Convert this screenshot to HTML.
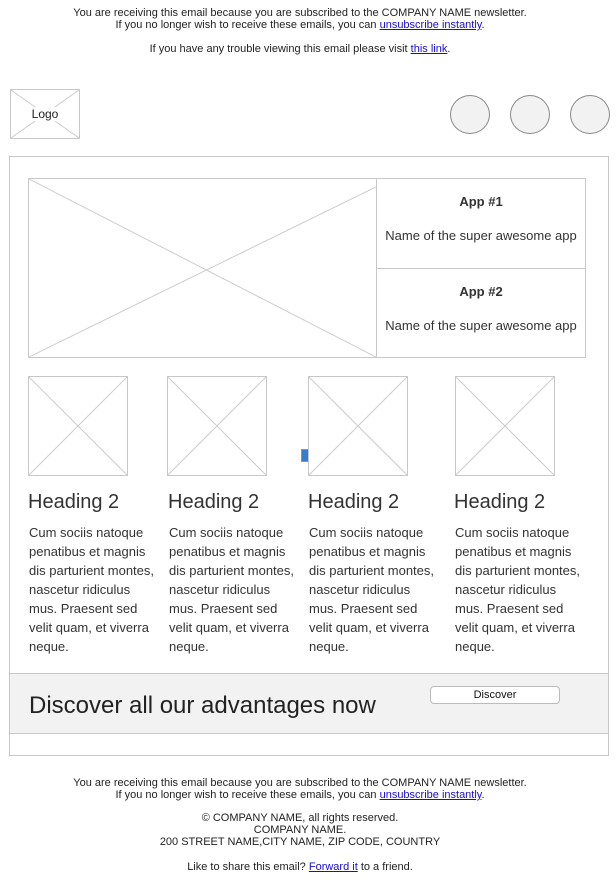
<!DOCTYPE html>
<html><head><meta charset="utf-8"><style>
*{margin:0;padding:0;box-sizing:border-box}
body{width:616px;height:883px;background:#fff;font-family:"Liberation Sans",Arial,sans-serif;color:#222;position:relative;overflow:hidden}
.a{position:absolute}
.t{position:absolute;left:0;width:600px;text-align:center;font-size:11px;line-height:12px;color:#222}
a{color:#1a0dcc;text-decoration:underline}
.ph{position:absolute;border:1px solid #c8c8c8;background:#fff}
.ph svg{position:absolute;left:0;top:0;width:100%;height:100%}
.h2{position:absolute;top:490px;font-size:20px;line-height:24px;color:#333}
.p{position:absolute;top:523px;font-size:13px;line-height:19px;color:#333;width:130px}
.app{position:absolute;left:376px;width:210px;border:1px solid #c8c8c8;text-align:center;font-size:13px;color:#333}
.c{position:absolute;top:95px;width:40px;height:39px;border-radius:50%;border:1px solid #888;background:#f2f2f2}
</style></head><body>
<div class="t" style="top:7px">You are receiving this email because you are subscribed to the COMPANY NAME newsletter.</div>
<div class="t" style="top:19px">If you no longer wish to receive these emails, you can <a>unsubscribe instantly</a>.</div>
<div class="t" style="top:43px">If you have any trouble viewing this email please visit <a>this link</a>.</div>

<div class="ph" style="left:10px;top:89px;width:70px;height:50px"><svg viewBox="0 0 70 50" preserveAspectRatio="none"><line x1="0" y1="0" x2="70" y2="50" stroke="#ccc"/><line x1="70" y1="0" x2="0" y2="50" stroke="#ccc"/></svg><div class="a" style="left:0;top:17px;width:68px;text-align:center;font-size:12px;background:transparent"><span style="background:#fff">Logo</span></div></div>
<div class="c" style="left:450px"></div>
<div class="c" style="left:510px"></div>
<div class="c" style="left:570px"></div>

<div class="a" style="left:9px;top:156px;width:600px;height:600px;border:1px solid #c8c8c8"></div>

<div class="ph" style="left:28px;top:178px;width:349px;height:180px"><svg viewBox="0 0 349 180" preserveAspectRatio="none"><line x1="0" y1="0" x2="349" y2="180" stroke="#ccc"/><line x1="349" y1="8" x2="0" y2="180" stroke="#ccc"/></svg></div>
<div class="app" style="top:178px;height:91px"><div style="font-weight:bold;margin-top:15px">App #1</div><div style="margin-top:19px">Name of the super awesome app</div></div>
<div class="app" style="top:268px;height:90px"><div style="font-weight:bold;margin-top:15px">App #2</div><div style="margin-top:19px">Name of the super awesome app</div></div>

<div class="a" style="left:301px;top:449px;width:9px;height:13px;background:#3a7bc8;border:1px solid #6a9ad8"></div>
<div class="ph" style="left:28px;top:376px;width:100px;height:100px"><svg viewBox="0 0 100 100"><line x1="0" y1="0" x2="100" y2="100" stroke="#ccc"/><line x1="100" y1="0" x2="0" y2="100" stroke="#ccc"/></svg></div>
<div class="ph" style="left:167px;top:376px;width:100px;height:100px"><svg viewBox="0 0 100 100"><line x1="0" y1="0" x2="100" y2="100" stroke="#ccc"/><line x1="100" y1="0" x2="0" y2="100" stroke="#ccc"/></svg></div>
<div class="ph" style="left:308px;top:376px;width:100px;height:100px"><svg viewBox="0 0 100 100"><line x1="0" y1="0" x2="100" y2="100" stroke="#ccc"/><line x1="100" y1="0" x2="0" y2="100" stroke="#ccc"/></svg></div>
<div class="ph" style="left:455px;top:376px;width:100px;height:100px"><svg viewBox="0 0 100 100"><line x1="0" y1="0" x2="100" y2="100" stroke="#ccc"/><line x1="100" y1="0" x2="0" y2="100" stroke="#ccc"/></svg></div>

<div class="h2" style="left:28px">Heading 2</div>
<div class="h2" style="left:168px">Heading 2</div>
<div class="h2" style="left:308px">Heading 2</div>
<div class="h2" style="left:454px">Heading 2</div>
<div class="p" style="left:29px">Cum sociis natoque penatibus et magnis dis parturient montes, nascetur ridiculus mus. Praesent sed velit quam, et viverra neque.</div>
<div class="p" style="left:169px">Cum sociis natoque penatibus et magnis dis parturient montes, nascetur ridiculus mus. Praesent sed velit quam, et viverra neque.</div>
<div class="p" style="left:309px">Cum sociis natoque penatibus et magnis dis parturient montes, nascetur ridiculus mus. Praesent sed velit quam, et viverra neque.</div>
<div class="p" style="left:455px">Cum sociis natoque penatibus et magnis dis parturient montes, nascetur ridiculus mus. Praesent sed velit quam, et viverra neque.</div>

<div class="a" style="left:9px;top:673px;width:600px;height:61px;background:#f2f2f2;border:1px solid #c8c8c8"></div>
<div class="a" style="left:29px;top:691px;font-size:24px;line-height:30px;color:#222">Discover all our advantages now</div>
<div class="a" style="left:430px;top:686px;width:130px;height:18px;background:#fff;border:1px solid #bbb;border-radius:4px;font-size:11px;line-height:16px;text-align:center;color:#111">Discover</div>

<div class="t" style="top:777px">You are receiving this email because you are subscribed to the COMPANY NAME newsletter.</div>
<div class="t" style="top:789px">If you no longer wish to receive these emails, you can <a>unsubscribe instantly</a>.</div>
<div class="t" style="top:812px">© COMPANY NAME, all rights reserved.</div>
<div class="t" style="top:824px">COMPANY NAME.</div>
<div class="t" style="top:836px">200 STREET NAME,CITY NAME, ZIP CODE, COUNTRY</div>
<div class="t" style="top:861px">Like to share this email? <a>Forward it</a> to a friend.</div>
</body></html>
